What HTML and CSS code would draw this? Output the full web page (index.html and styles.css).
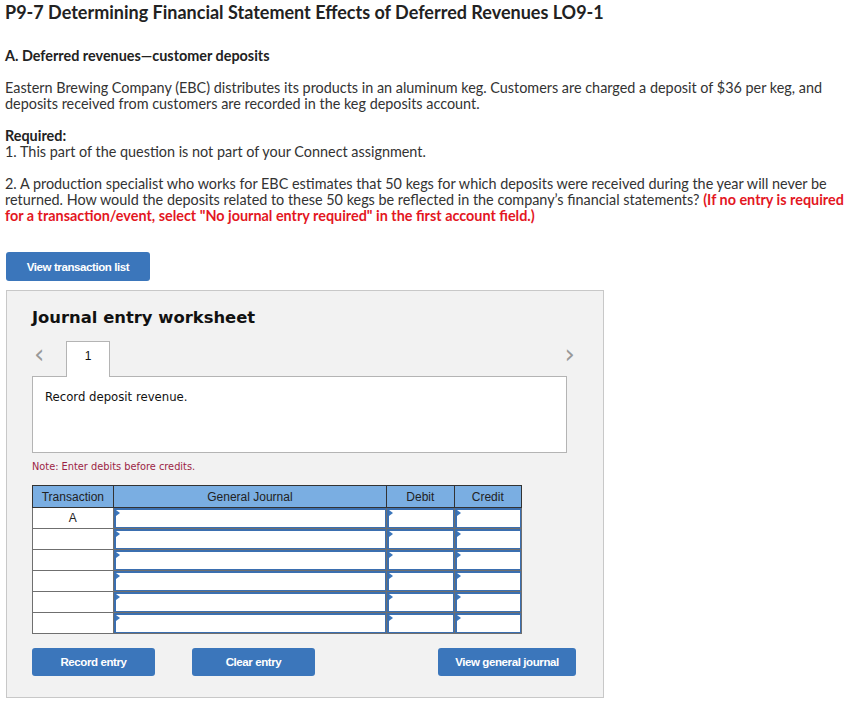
FILE: index.html
```html
<!DOCTYPE html>
<html lang="en">
<head>
  <meta charset="UTF-8">
  <title>P9-7 Deferred Revenues</title>
  <link rel="stylesheet" href="styles.css">
</head>
<body>

<h1 class="title">P9-7 Determining Financial Statement Effects of Deferred Revenues LO9-1</h1>

<div class="question">
  <p class="part"><b>A. Deferred revenues—customer deposits</b></p>
  <p>Eastern Brewing Company (EBC) distributes its products in an aluminum keg. Customers are charged a deposit of $36 per keg, and deposits received from customers are recorded in the keg deposits account.</p>
  <p><b>Required:</b><br>1. This part of the question is not part of your Connect assignment.</p>
  <p>2. A production specialist who works for EBC estimates that 50 kegs for which deposits were received during the year will never be returned. How would the deposits related to these 50 kegs be reflected in the company’s financial statements? <span class="hint">(If no entry is required for a transaction/event, select "No journal entry required" in the first account field.)</span></p>
</div>

<button class="btn btn-list">View transaction list</button>

<div class="worksheet">
  <h2>Journal entry worksheet</h2>

  <div class="tabs">
    <span class="arrow">&lsaquo;</span>
    <div class="tab">1</div>
    <span class="arrow arrow-right">&rsaquo;</span>
  </div>

  <div class="entry-box">Record deposit revenue.</div>

  <p class="note">Note: Enter debits before credits.</p>

  <table class="journal">
    <thead>
      <tr>
        <th class="col-tr">Transaction</th>
        <th class="col-gj">General Journal</th>
        <th class="col-amt">Debit</th>
        <th class="col-amt">Credit</th>
      </tr>
    </thead>
    <tbody id="rows"></tbody>
  </table>

  <div class="actions">
    <button class="btn btn-record">Record entry</button>
    <button class="btn btn-clear">Clear entry</button>
    <button class="btn btn-view">View general journal</button>
  </div>
</div>

<script>
  var tbody = document.getElementById('rows');
  for (var i = 0; i < 6; i++) {
    var tr = document.createElement('tr');
    var label = i === 0 ? 'A' : '';
    tr.innerHTML =
      '<td class="tr-cell">' + label + '</td>' +
      '<td class="in-cell"><div class="field"></div></td>' +
      '<td class="in-cell"><div class="field"></div></td>' +
      '<td class="in-cell"><div class="field"></div></td>';
    tbody.appendChild(tr);
  }
</script>

</body>
</html>
```

FILE: styles.css
```css
body {
  margin: 0;
  padding: 0 0 0 5px;
  font-family: Lato, "Open Sans", sans-serif;
  color: #333;
  background: #fff;
}

.title {
  font-size: 18px;
  line-height: 20px;
  font-weight: bold;
  color: #222;
  margin: 2px 0 26px 0;
}

.question p {
  font-size: 14.4px;
  line-height: 16px;
  margin: 0 0 16px 0;
}

.question b {
  color: #222;
}

.hint {
  color: #e3171f;
  font-weight: bold;
}

.btn {
  background-color: #3b76bb;
  border: none;
  border-radius: 3px;
  color: white;
  font-family: "Liberation Sans", Arial, sans-serif;
  font-weight: bold;
  font-size: 11.5px;
  letter-spacing: -0.4px;
  height: 28px;
  cursor: pointer;
}

.btn-list {
  width: 144px;
  height: 29px;
  margin: 28px 0 0 1px;
  display: block;
}

.worksheet {
  margin: 9px 0 0 1px;
  width: 598px;
  box-sizing: border-box;
  background-color: #f2f2f2;
  border: 1px solid #c8c8c8;
  padding: 17px 36px 21px 25px;
}

.worksheet h2 {
  font-family: "DejaVu Sans", Verdana, sans-serif;
  font-size: 16.4px;
  line-height: 20px;
  font-weight: bold;
  color: #111;
  margin: 0 0 12px 0;
}

.tabs {
  display: flex;
  align-items: flex-end;
  height: 36px;
}

.arrow {
  font-family: "DejaVu Sans", sans-serif;
  font-size: 26px;
  color: #999;
  width: 32px;
  padding-left: 2px;
  align-self: center;
  line-height: 20px;
  margin-bottom: 9px;
}

.arrow-right {
  margin-left: auto;
  width: auto;
  padding: 0;
  margin-right: -8px;
}

.tab {
  width: 44px;
  height: 36px;
  box-sizing: border-box;
  background: #fff;
  border: 1px solid #b4b4b4;
  border-bottom: none;
  text-align: center;
  font-family: "Liberation Sans", Arial, sans-serif;
  font-size: 12px;
  line-height: 28px;
  color: #111;
  margin-bottom: -1px;
  position: relative;
}

.entry-box {
  height: 77px;
  box-sizing: border-box;
  background: #fff;
  border: 1px solid #b4b4b4;
  padding: 13px 12px;
  font-family: "DejaVu Sans", Verdana, sans-serif;
  font-size: 11.7px;
  color: #111;
}

.note {
  font-family: "DejaVu Sans", Verdana, sans-serif;
  font-size: 9.8px;
  color: #9c1f45;
  margin: 8px 0 13px 0;
}

.journal {
  border-collapse: collapse;
  width: 490px;
  font-family: "Liberation Sans", Arial, sans-serif;
  font-size: 12px;
  border: 1px solid #6f6f6f;
}

.journal th {
  background-color: #7aaee2;
  color: #222;
  font-weight: normal;
  height: 21px;
  padding: 0;
  border: 1px solid #333;
}

.col-tr { width: 80px; }
.col-gj { width: 276px; }
.col-amt { width: 67px; }

.journal td {
  height: 20px;
  padding: 0;
  border: 1px solid #6f6f6f;
  background: #fff;
}

.tr-cell {
  text-align: center;
  color: #222;
}

.in-cell .field {
  height: 17px;
  border: 1px solid #3b6fb0;
  border-top-width: 2px;
  border-left-width: 2px;
  position: relative;
}

.in-cell .field::before {
  content: "";
  position: absolute;
  left: 0;
  top: 0;
  border-left: 4px solid #3b76bb;
  border-top: 3px solid transparent;
  border-bottom: 3px solid transparent;
}

.actions {
  display: flex;
  margin-top: 14px;
}

.actions .btn {
  flex-shrink: 0;
}

.btn-record {
  width: 123px;
}

.btn-clear {
  width: 123px;
  margin-left: 37px;
}

.btn-view {
  width: 138px;
  margin-left: 123px;
}
```
